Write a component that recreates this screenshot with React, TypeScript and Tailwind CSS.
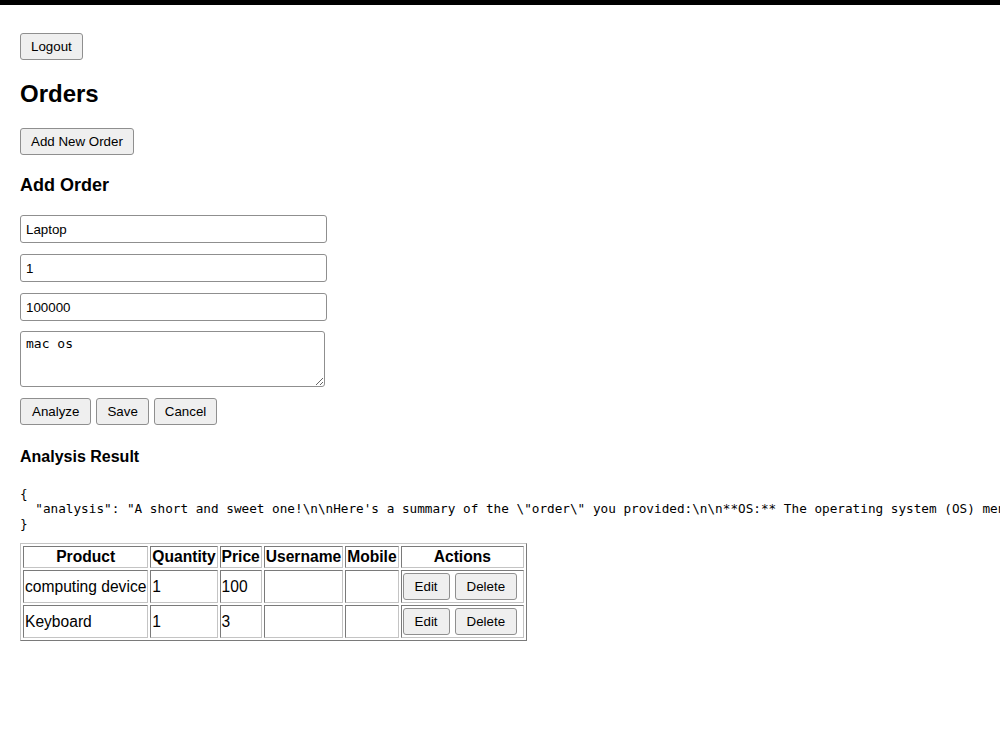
import React, { useState } from 'react';

type Order = {
  id: number;
  product: string;
  quantity: number;
  price: number;
  username: string;
  mobile: string;
};

const initialOrders: Order[] = [
  { id: 1, product: 'computing device', quantity: 1, price: 100, username: '', mobile: '' },
  { id: 2, product: 'Keyboard', quantity: 1, price: 3, username: '', mobile: '' },
];

const analysis = {
  analysis:
    'A short and sweet one!\n\nHere\'s a summary of the "order" you provided:\n\n**OS:** The operating system (OS) mentioned is macOS, which is developed by Apple and runs on Mac computers.\n\n**Product:** Laptop\n**Quantity:** 1\n**Price:** 100000',
};

const btn =
  'bg-[#efefef] hover:bg-[#e5e5e5] border border-[#8f8f8f] rounded-[3px] px-[10px] py-[5px] text-[13.333px] leading-[15px] text-black';

const field =
  'block w-[307px] h-[28px] border border-[#8f8f8f] rounded-[3px] px-[5px] text-[13.333px] text-black bg-white';

const td =
  'border border-t-[#7a7a7a] border-l-[#7a7a7a] border-b-[#c4c4c4] border-r-[#c4c4c4] p-[1px] text-[15.6px] leading-[18px]';

export default function App() {
  const [orders] = useState<Order[]>(initialOrders);
  const [product, setProduct] = useState('Laptop');
  const [quantity, setQuantity] = useState('1');
  const [price, setPrice] = useState('100000');
  const [notes, setNotes] = useState('mac os');

  return (
    <div className="min-h-screen overflow-hidden bg-white text-black font-['Liberation_Sans',Arial,sans-serif]">
      <div className="h-[5px] bg-black" />

      <div className="px-5 pt-7">
        <button className={btn}>Logout</button>

        <h2 className="mt-5 mb-5 text-[24px] leading-[28px] font-bold">Orders</h2>

        <button className={btn}>Add New Order</button>

        <h3 className="mt-[19px] mb-[19px] text-[18px] leading-[22px] font-bold">Add Order</h3>

        {/* order form */}
        <input className={field + ' mb-[11px]'} value={product} onChange={(e) => setProduct(e.target.value)} />
        <input className={field + ' mb-[11px]'} value={quantity} onChange={(e) => setQuantity(e.target.value)} />
        <input className={field + ' mb-[10px]'} value={price} onChange={(e) => setPrice(e.target.value)} />
        <textarea
          className="block w-[305px] h-[56px] border border-[#8f8f8f] rounded-[3px] px-[5px] py-[4px] text-[13px] leading-[15px] font-['DejaVu_Sans_Mono',monospace] bg-white"
          value={notes}
          onChange={(e) => setNotes(e.target.value)}
        />
        <div className="flex gap-[5px] mt-[11px]">
          <button className={btn + ' px-[11px] bg-[#e3e3e3]'}>Analyze</button>
          <button className={btn}>Save</button>
          <button className={btn}>Cancel</button>
        </div>

        <h4 className="mt-[22px] text-[16px] leading-[19px] font-bold">Analysis Result</h4>

        <pre className="mt-5 text-[12.7px] leading-[15px] whitespace-pre font-['DejaVu_Sans_Mono',monospace]">
          {JSON.stringify(analysis, null, 2)}
        </pre>

        <table className="mt-3 border-separate border-spacing-[2px] border border-t-[#c4c4c4] border-l-[#c4c4c4] border-b-[#7a7a7a] border-r-[#7a7a7a]">
          <thead>
            <tr>
              <th className={td + ' font-bold text-center'}>Product</th>
              <th className={td + ' font-bold text-center'}>Quantity</th>
              <th className={td + ' font-bold text-center'}>Price</th>
              <th className={td + ' font-bold text-center'}>Username</th>
              <th className={td + ' font-bold text-center'}>Mobile</th>
              <th className={td + ' font-bold text-center'}>Actions</th>
            </tr>
          </thead>
          <tbody>
            {orders.map((o) => (
              <tr key={o.id}>
                <td className={td}>{o.product}</td>
                <td className={td}>{o.quantity}</td>
                <td className={td}>{o.price}</td>
                <td className={td}>{o.username}</td>
                <td className={td}>{o.mobile}</td>
                <td className={td}>
                  <div className="flex py-[1px]">
                    <button className={btn + ' px-[11px] mr-[5px]'}>Edit</button>
                    <button className={btn + ' px-[11px] mr-[5px]'}>Delete</button>
                  </div>
                </td>
              </tr>
            ))}
          </tbody>
        </table>
      </div>
    </div>
  );
}
